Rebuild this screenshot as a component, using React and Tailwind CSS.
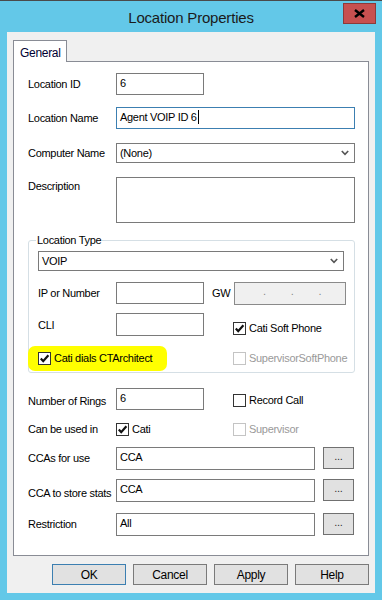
import React from 'react';

const font = "font-['Liberation_Sans',Arial,sans-serif]";

const Check = ({ checked, disabled }) => (
  <div
    className={`w-[13px] h-[13px] shrink-0 border bg-white flex items-center justify-center ${
      disabled ? 'border-[#c4c4c4]' : 'border-[#333333]'
    }`}
  >
    {checked && (
      <svg width="11" height="11" viewBox="0 0 11 11">
        <path d="M1.8 5.6 L4.2 8.2 L9.4 2.2" fill="none" stroke="#111" strokeWidth="2.2" />
      </svg>
    )}
  </div>
);

const CheckLabel = ({ checked, disabled, children }) => (
  <div className="flex items-center gap-[3px]">
    <Check checked={checked} disabled={disabled} />
    <span className={disabled ? 'text-[#9a9a9a]' : 'text-black'}>{children}</span>
  </div>
);

const Box = ({ className = '', children, focused }) => (
  <div
    className={`border bg-white pl-[3px] pt-[2px] leading-[14px] ${
      focused ? 'border-[#3c7fb1]' : 'border-[#7a7a7a]'
    } ${className}`}
  >
    {children}
  </div>
);

const Chevron = () => (
  <svg width="8" height="6" viewBox="0 0 8 6">
    <path d="M0.8 1 L4 4.4 L7.2 1" fill="none" stroke="#555" strokeWidth="1.6" />
  </svg>
);

const Select = ({ className = '', value }) => (
  <div className={`border border-[#7a7a7a] bg-white pl-[3px] pr-[5px] flex items-center justify-between ${className}`}>
    <span>{value}</span>
    <Chevron />
  </div>
);

const Dots = () => (
  <div className="w-[31px] h-[22px] border border-[#707070] bg-[#e1e1e1] flex items-center justify-center text-[#333] leading-none pb-[3px]">
    ...
  </div>
);

const Btn = ({ children, primary }) => (
  <div
    className={`w-[74px] h-[21px] border bg-[#e1e1e1] flex items-center justify-center text-[12px] ${
      primary ? 'border-[#3c7fb1]' : 'border-[#7a7a7a]'
    }`}
  >
    {children}
  </div>
);

export default function App() {
  return (
    <div className={`w-[382px] h-[600px] bg-[#63c8e8] border-t border-[#4a4a4a] flex flex-col ${font} text-[11px] tracking-[-0.3px] text-black`}>
      {/* title bar */}
      <div className="relative h-[31px] flex items-center justify-center">
        <span className="text-[15px] tracking-[-0.2px] text-[#1b1b1b] mt-[4px]">Location Properties</span>
        <div className="absolute right-[6px] top-[2px] w-[33px] h-[21px] bg-[#c75050] border border-[#8c3a3a] flex items-center justify-center">
          <svg width="11" height="9" viewBox="0 0 11 9">
            <path d="M1 1 L10 8 M10 1 L1 8" stroke="#000" strokeWidth="2.4" />
          </svg>
        </div>
      </div>

      {/* dialog body */}
      <div className="mx-[7px] h-[561px] bg-[#f0f0f0] pl-[6px] pr-[6px] pt-[8px] flex flex-col">
        <div className="w-[54px] h-[22px] bg-white border border-b-0 border-[#898c95] -mb-px relative z-10 pl-[6px] pt-[3px] text-[12px] text-[#000033]">
          General
        </div>
        <div className="w-[356px] h-[495px] bg-white border border-[#898c95] pl-[14px] pt-[11px] flex flex-col">
          <div className="flex items-center h-[22px]">
            <span className="w-[88px]">Location ID</span>
            <Box className="w-[88px] h-[22px]">6</Box>
          </div>
          <div className="flex items-center h-[22px] mt-[12px]">
            <span className="w-[88px]">Location Name</span>
            <Box focused className="w-[239px] h-[22px] flex items-start">
              <span>Agent VOIP ID 6</span>
              <span className="w-px h-[14px] bg-black ml-px" />
            </Box>
          </div>
          <div className="flex items-center h-[20px] mt-[14px]">
            <span className="w-[88px]">Computer Name</span>
            <Select className="w-[239px] h-[20px]" value="(None)" />
          </div>
          <div className="flex items-start h-[46px] mt-[14px]">
            <span className="w-[88px] pt-[1px]">Description</span>
            <Box className="w-[239px] h-[46px]" />
          </div>

          {/* Location Type group */}
          <div className="w-[327px] h-[133px] mt-[17px] border border-[#d5dfe5] rounded-[3px] pl-[9px] flex flex-col relative">
            <div className="absolute left-[-1px] top-[105px] w-[139px] h-[25px] bg-[#ffff00] rounded-[7px]" />
            <span className="-mt-[8px] -ml-[2px] w-fit bg-white px-[1px] leading-[14px] relative">Location Type</span>
            <Select className="w-[306px] h-[20px] mt-[4px]" value="VOIP" />
            <div className="flex items-center h-[22px] mt-[11px]">
              <span className="w-[78px]">IP or Number</span>
              <Box className="w-[88px] h-[22px]" />
              <span className="w-[22px] ml-[8px]">GW</span>
              <div className="w-[112px] h-[23px] border border-[#8a8a8a] bg-[#f0f0f0] flex items-center pl-[28px] gap-[25px] text-[#888] leading-none pb-[3px]">
                <span>.</span>
                <span>.</span>
                <span>.</span>
              </div>
            </div>
            <div className="flex items-start h-[23px] mt-[9px]">
              <span className="w-[78px] pt-[4px]">CLI</span>
              <Box className="w-[88px] h-[23px]" />
              <div className="ml-[29px] mt-[7px]">
                <CheckLabel checked>Cati Soft Phone</CheckLabel>
              </div>
            </div>
            <div className="flex items-center h-[13px] mt-[16px] relative">
              <div className="w-[195px]">
                <CheckLabel checked>Cati dials CTArchitect</CheckLabel>
              </div>
              <CheckLabel disabled>SupervisorSoftPhone</CheckLabel>
            </div>
          </div>

          <div className="flex items-start h-[22px] mt-[15px]">
            <span className="w-[88px] pt-[5px]">Number of Rings</span>
            <Box className="w-[88px] h-[22px]">6</Box>
            <div className="ml-[29px] mt-[4px]">
              <CheckLabel>Record Call</CheckLabel>
            </div>
          </div>
          <div className="flex items-center h-[13px] mt-[13px]">
            <span className="w-[88px]">Can be used in</span>
            <div className="w-[117px]">
              <CheckLabel checked>Cati</CheckLabel>
            </div>
            <CheckLabel disabled>Supervisor</CheckLabel>
          </div>
          <div className="flex items-center h-[23px] mt-[11px]">
            <span className="w-[88px]">CCAs for use</span>
            <Box className="w-[199px] h-[23px]">CCA</Box>
            <div className="ml-[8px] -mt-[2px]">
              <Dots />
            </div>
          </div>
          <div className="flex items-center h-[23px] mt-[9px]">
            <span className="w-[88px] pt-[5px]">CCA to store stats</span>
            <Box className="w-[199px] h-[23px]">CCA</Box>
            <div className="ml-[8px] -mt-[2px]">
              <Dots />
            </div>
          </div>
          <div className="flex items-center h-[23px] mt-[11px]">
            <span className="w-[88px]">Restriction</span>
            <Box className="w-[199px] h-[23px]">All</Box>
            <div className="ml-[8px] -mt-px">
              <Dots />
            </div>
          </div>
        </div>

        <div className="flex justify-end gap-[7px] mt-[8px] pr-0">
          <Btn primary>OK</Btn>
          <Btn>Cancel</Btn>
          <Btn>Apply</Btn>
          <Btn>Help</Btn>
        </div>
      </div>
    </div>
  );
}
